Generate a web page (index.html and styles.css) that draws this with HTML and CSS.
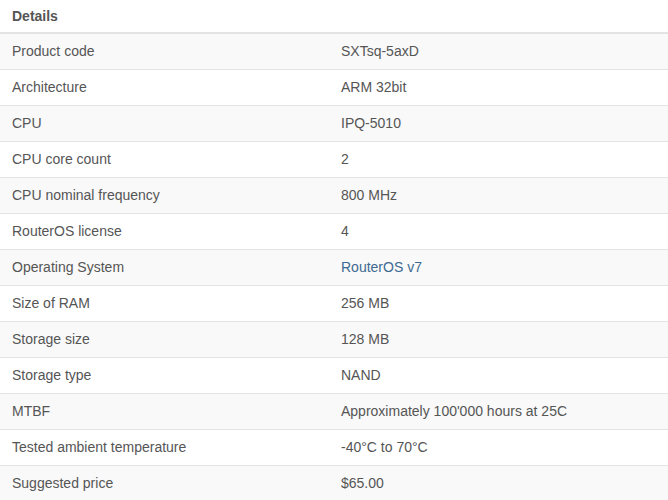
FILE: index.html
```html
<!DOCTYPE html>
<html>
<head>
<meta charset="utf-8">
<link rel="stylesheet" href="styles.css">
</head>
<body>
<table class="specs">
  <colgroup><col class="c-name"><col class="c-value"></colgroup>
  <thead>
    <tr><th colspan="2">Details</th></tr>
  </thead>
  <tbody>
    <tr><td>Product code</td><td>SXTsq-5axD</td></tr>
    <tr><td>Architecture</td><td>ARM 32bit</td></tr>
    <tr><td>CPU</td><td>IPQ-5010</td></tr>
    <tr><td>CPU core count</td><td>2</td></tr>
    <tr><td>CPU nominal frequency</td><td>800 MHz</td></tr>
    <tr><td>RouterOS license</td><td>4</td></tr>
    <tr><td>Operating System</td><td><a class="link" href="#">RouterOS v7</a></td></tr>
    <tr><td>Size of RAM</td><td>256 MB</td></tr>
    <tr><td>Storage size</td><td>128 MB</td></tr>
    <tr><td>Storage type</td><td>NAND</td></tr>
    <tr><td>MTBF</td><td>Approximately 100'000 hours at 25C</td></tr>
    <tr><td>Tested ambient temperature</td><td>-40°C to 70°C</td></tr>
    <tr><td>Suggested price</td><td>$65.00</td></tr>
  </tbody>
</table>
</body>
</html>
```

FILE: styles.css
```css
html, body {
  margin: 0;
  padding: 0;
  background: #fff;
}
body {
  font-family: "Liberation Sans", Arial, sans-serif;
  font-size: 14px;
  color: #555;
}
.specs {
  width: 668px;
  border-collapse: collapse;
  table-layout: fixed;
}
.c-name { width: 329px; }
.specs th {
  text-align: left;
  font-weight: bold;
  padding: 6px 12px 6px;
  line-height: 20px;
  border-bottom: 2px solid #e3e3e3;
}
.specs td {
  padding: 8px 12px;
  line-height: 19px;
  border-top: 1px solid #e3e3e3;
  vertical-align: top;
}
.specs tbody tr:first-child td { border-top: 0; }
.specs tbody tr:nth-child(odd) td { background: #f9f9f9; }
.link {
  color: #3d6a92;
  text-decoration: none;
}
```
